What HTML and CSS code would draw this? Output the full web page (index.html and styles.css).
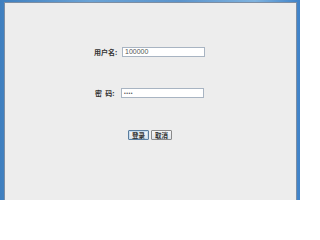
FILE: index.html
```html
<!DOCTYPE html>
<html>
<head>
<meta charset="utf-8">
<link rel="stylesheet" href="styles.css">
</head>
<body>
<div class="frame">
  <div class="panel">
    <div class="row row-user">
      <span class="label">用户名:</span>
      <div class="input">100000</div>
    </div>
    <div class="row row-pass">
      <span class="label">密&nbsp;&nbsp;码:</span>
      <div class="input pass">••••</div>
    </div>
    <div class="buttons">
      <div class="btn focus">登录</div>
      <div class="btn">取消</div>
    </div>
  </div>
</div>
</body>
</html>
```
FILE: styles.css
```css
html, body {
  margin: 0;
  padding: 0;
  width: 300px;
  height: 200px;
  overflow: hidden;
}
body {
  font-family: "Noto Sans CJK SC", "Noto Sans", sans-serif;
  font-size: 7px;
  color: #333;
}
.frame {
  box-sizing: border-box;
  width: 300px;
  height: 200px;
  display: flex;
  padding: 2px 3px 0 4px;
  background: linear-gradient(90deg, #3f7fbf 0%, #6aa3d6 30%, #5b94cc 60%, #7fb3df 85%, #3f82c8 100%);
}
.panel {
  flex: 1;
  display: flex;
  flex-direction: column;
  background: #ededed;
  border: 1px solid #7d8ea3;
  border-bottom: none;
  padding-top: 44px;
}
.row {
  display: flex;
  align-items: center;
  height: 10px;
}
.row-user {
  padding-left: 89px;
}
.row-pass {
  margin-top: 31px;
  padding-left: 90px;
}
.label {
  width: 28px;
  font-weight: bold;
  line-height: 10px;
  white-space: nowrap;
}
.row-pass .label {
  width: 26px;
}
.input {
  box-sizing: border-box;
  width: 83px;
  height: 10px;
  background: #fff;
  border: 1px solid #a8b4c2;
  font-family: "Liberation Sans", sans-serif;
  font-size: 7px;
  line-height: 8px;
  padding-left: 2px;
  color: #555;
}
.input.pass {
  font-size: 5px;
  letter-spacing: 0.5px;
}
.buttons {
  display: flex;
  gap: 2px;
  margin-top: 32px;
  padding-left: 123px;
}
.btn {
  box-sizing: border-box;
  width: 21px;
  height: 10px;
  border: 1px solid #8a8a8a;
  border-radius: 1px;
  background: linear-gradient(#f6f6f6, #dde3ea);
  font-size: 6.5px;
  font-weight: bold;
  line-height: 8px;
  text-align: center;
  color: #333;
}
.btn.focus {
  border-color: #5a7d9e;
  box-shadow: inset 0 0 0 1px #c8dcee;
}
```
